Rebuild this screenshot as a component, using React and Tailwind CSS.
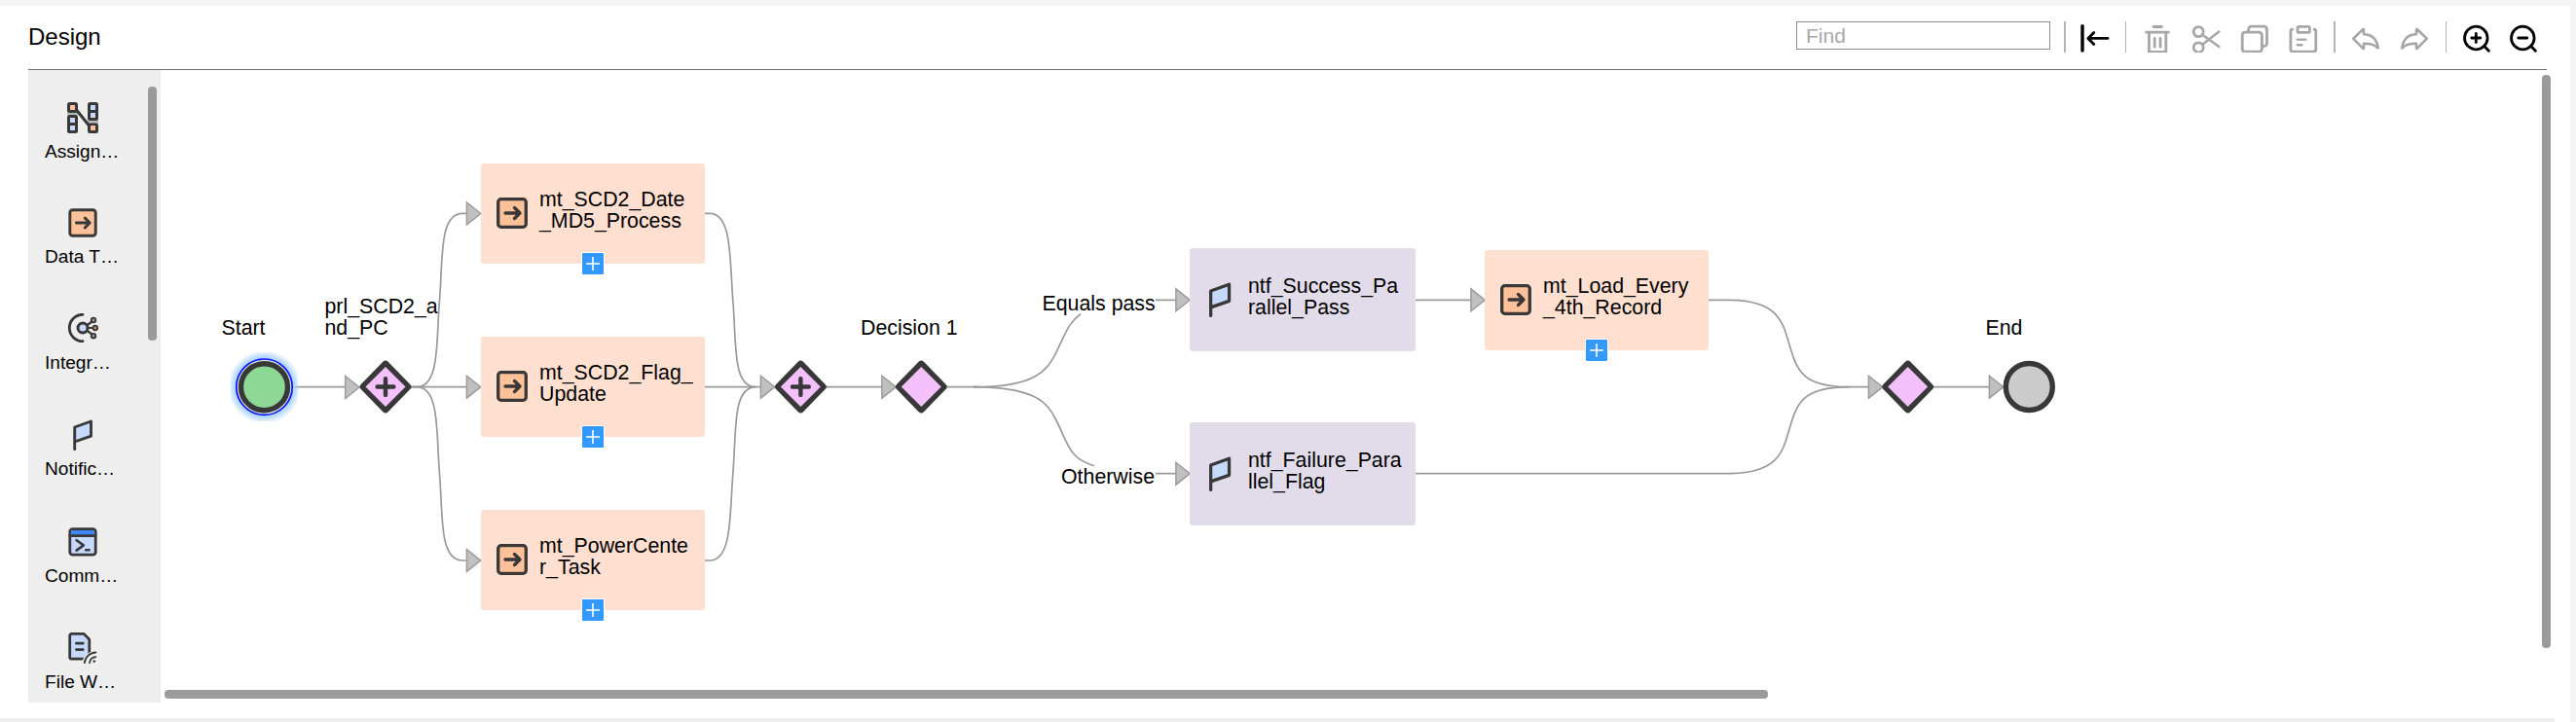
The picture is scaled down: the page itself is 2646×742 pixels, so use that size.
import React from "react";

const INK = "#383838";

const TaskIcon = ({ className }) => (
  <svg viewBox="0 0 32 32" className={className} fill="none" stroke={INK} strokeWidth="3.3" strokeLinecap="round" strokeLinejoin="round">
    <rect x="1.7" y="1.7" width="28.6" height="28.6" rx="3" fill="#ffc199" />
    <path d="M9 16h14.5M18.5 10.5l5.5 5.5-5.5 5.5" />
  </svg>
);

const SmallTaskIcon = ({ className }) => (
  <svg viewBox="0 0 32 32" className={className} fill="none" stroke={INK} strokeWidth="2.9" strokeLinecap="round" strokeLinejoin="round">
    <rect x="2.8" y="2.7" width="26.4" height="26.6" rx="2.8" fill="#ffc199" />
    <path d="M9.4 16h13.4M18.2 11l5 5-5 5" />
  </svg>
);

const FlagIcon = ({ className }) => (
  <svg viewBox="0 0 32 32" className={className} fill="none" stroke={INK} strokeWidth="2.9" strokeLinecap="round" strokeLinejoin="round">
    <path d="M7.7 30.6V8l16.8-6v15.2L7.7 23z" fill="#c5dafa" />
  </svg>
);

const AssignIcon = ({ className }) => (
  <svg viewBox="0 0 32 32" className={className}>
    <path d="M0 10.500h11v3H0zM21 18.500h11v3.500H21z" fill="#b9beb6" />
    <path d="M10 8.500l12 15" stroke={INK} strokeWidth="3" />
    <rect x="0" y="0" width="11" height="11" rx="2.5" fill={INK} />
    <rect x="0" y="13" width="11" height="19" rx="2.5" fill={INK} />
    <rect x="21" y="0" width="11" height="19" rx="2.5" fill={INK} />
    <rect x="21" y="21.5" width="11" height="10.5" rx="2.5" fill={INK} />
    <path d="M3 3h5v5H3zM24 24h5v5h-5z" fill="#ffc199" />
    <path d="M3 16h5v5H3zM3 24h5v5H3zM24 3h5v5h-5zM24 11h5v5h-5z" fill="#c5dafa" />
  </svg>
);

const IntegrationIcon = ({ className }) => (
  <svg viewBox="0 0 32 32" className={className} fill="none" stroke={INK} strokeLinecap="round">
    <path d="M16 1.3a13.7 13.7 0 0 0 0 27.4" strokeWidth="2.8" />
    <path d="M20 12.5l5.5-4M21 15h6M20 17.5l5.5 4" strokeWidth="2.2" />
    <circle cx="16" cy="15" r="5" strokeWidth="3" fill="#c5dafa" />
    <g strokeWidth="1.8" fill="#b98d78">
      <circle cx="27" cy="7" r="2.3" />
      <circle cx="28.8" cy="15" r="2.3" />
      <circle cx="27" cy="23.2" r="2.3" />
    </g>
  </svg>
);

const CommandIcon = ({ className }) => (
  <svg viewBox="0 0 32 32" className={className} fill="none" stroke={INK} strokeWidth="2.8" strokeLinecap="round" strokeLinejoin="round">
    <rect x="2.8" y="2.6" width="26.4" height="26.6" rx="2.8" fill="#c5dafa" />
    <path d="M4.2 4h23.6v5H4.2z" fill="#3f87ff" stroke="none" />
    <path d="M3 9.6h26" />
    <path d="M9.6 14.2l7.2 5.2-7.2 5.2M19.2 24.2h3.4" strokeWidth="2.6" />
  </svg>
);

const FileIcon = ({ className }) => (
  <svg viewBox="0 0 32 32" className={className} fill="none" stroke={INK} strokeWidth="2.8" strokeLinecap="round" strokeLinejoin="round">
    <path d="M4.5 1.4h12.7l5.6 5.8v20H4.5a1.8 1.8 0 0 1-1.8-1.8V3.2a1.8 1.8 0 0 1 1.8-1.8z" fill="#c5dafa" />
    <path d="M9.4 11.2h6.8M9.4 17.6h6.8" />
    <path d="M14.8 32.5a16 16 0 0 1 16-14v14z" fill="#eeeeee" stroke="none" />
    <path d="M17.8 31.2a12 12 0 0 1 11.6-10.7M23 31.2a7 7 0 0 1 6.4-6" strokeWidth="1.8" />
    <circle cx="27.8" cy="29.6" r="0.9" fill={INK} strokeWidth="1" />
  </svg>
);

const PALETTE = [
  { label: "Assign…", Icon: AssignIcon, size: "h-[108px]" },
  { label: "Data T…", Icon: SmallTaskIcon, size: "h-[109px]" },
  { label: "Integr…", Icon: IntegrationIcon, size: "h-[109px]" },
  { label: "Notific…", Icon: FlagIcon, size: "h-[110px]" },
  { label: "Comm…", Icon: CommandIcon, size: "h-[109px]" },
  { label: "File W…", Icon: FileIcon, size: "h-[72px]" },
];

/* ---------- toolbar ---------- */

const tool = {
  fill: "none",
  viewBox: "0 0 32 32",
  strokeWidth: 2.8,
  strokeLinecap: "round",
  strokeLinejoin: "round",
};

const CURVED_ARROW =
  "M3.2 17.7L13 8.2q1-.6 1 .6v4.4c8.5.2 13.600 5.200 14.700 14.300-4-4.200-8.600-5-14.700-4.800v4.500q0 1.200-1 .5z";

function Toolbar() {
  return (
    <div className="flex h-8">
      <input
        placeholder="Find"
        className="h-[29px] w-[261px] border border-[#8c8c8c] bg-white pl-[9px] text-[21px] leading-[27px] text-black outline-none placeholder:text-[#a8a8a8]"
      />
      <div className="ml-[14px] h-8 w-[2px] bg-[#b4b4b4]" />
      <svg {...tool} stroke="#000" className="ml-[14px] h-8 w-8">
        <path d="M3 4.600v25.400" strokeWidth="3.400" />
        <path d="M9 17.400h20M14.800 11.400l-6 6 6 6" />
      </svg>
      <div className="ml-[15px] h-8 w-px bg-[#b4b4b4]" />
      <svg {...tool} stroke="#a6a6a6" className="ml-4 h-8 w-8">
        <path d="M4.600 11.200h22.800M12 5.500h8.400" />
        <path d="M7.400 11.400v20.100h17.400V11.400" />
        <path d="M13.200 17.400v8.800M19 17.400v8.800" />
      </svg>
      <svg {...tool} stroke="#a6a6a6" className="ml-[18px] h-8 w-8">
        <circle cx="8.200" cy="10.600" r="5" />
        <circle cx="8.200" cy="26.800" r="5" />
        <path d="M12.600 14L29.300 26M12.600 23.400L29.300 10.600" strokeWidth="2.500" />
      </svg>
      <svg {...tool} stroke="#a6a6a6" className="ml-[18px] h-8 w-8">
        <rect x="3.200" y="11.200" width="20.200" height="20" rx="3" />
        <path d="M9.600 10V8.200a3 3 0 0 1 3-3h12.900a3 3 0 0 1 3 3V22.400a3 3 0 0 1-3 3h-1.500" />
      </svg>
      <svg {...tool} stroke="#a6a6a6" className="ml-[18px] h-8 w-8">
        <rect x="10" y="5.400" width="12.400" height="6" rx="1.500" />
        <path d="M4.600 8.200a2 2 0 0 0-1.700 2V28.500a2.700 2.700 0 0 0 2.700 2.700h20.500a2.700 2.700 0 0 0 2.700-2.700V10.200a2 2 0 0 0-1.700-2" />
        <path d="M9.800 18.600h8.600M9.800 24.300h4.600" strokeWidth="2.400" />
      </svg>
      <div className="ml-[15px] h-8 w-[2px] bg-[#b4b4b4]" />
      <svg {...tool} stroke="#a6a6a6" className="ml-[15px] h-8 w-8" strokeWidth="2.600">
        <path d={CURVED_ARROW} />
      </svg>
      <svg {...tool} stroke="#a6a6a6" className="ml-[18px] h-8 w-8" strokeWidth="2.600">
        <path transform="translate(32 0) scale(-1 1)" d={CURVED_ARROW} />
      </svg>
      <div className="ml-4 h-8 w-px bg-[#b4b4b4]" />
      <svg {...tool} stroke="#000" className="ml-4 h-8 w-8">
        <circle cx="14.300" cy="17" r="11.800" />
        <path d="M22.800 25.600l4.600 4.600M9.800 17h9M14.300 12.500v9" />
      </svg>
      <svg {...tool} stroke="#000" className="ml-4 h-8 w-8">
        <circle cx="14.300" cy="17" r="11.800" />
        <path d="M22.800 25.600l4.600 4.600M9.800 17h9" />
      </svg>
    </div>
  );
}

/* ---------- diagram ---------- */

const ORIGIN = { x: 165, y: 72 };
const at = (x, y) => ({ left: x - ORIGIN.x, top: y - ORIGIN.y });

const TASKS = [
  { x: 494, y: 168, lines: ["mt_SCD2_Date", "_MD5_Process"] },
  { x: 494, y: 346, lines: ["mt_SCD2_Flag_", "Update"] },
  { x: 494, y: 524, lines: ["mt_PowerCente", "r_Task"] },
  { x: 1525, y: 257, lines: ["mt_Load_Every", "_4th_Record"] },
];

const NOTICES = [
  { x: 1222, y: 255, lines: ["ntf_Success_Pa", "rallel_Pass"] },
  { x: 1222, y: 434, lines: ["ntf_Failure_Para", "llel_Flag"] },
];

const LABELS = [
  { x: 227.5, y: 326, lines: ["Start"] },
  { x: 333.5, y: 304, lines: ["prl_SCD2_a", "nd_PC"] },
  { x: 884, y: 326, lines: ["Decision 1"] },
  { x: 2039.5, y: 326, lines: ["End"] },
  { x: 1070.5, y: 301, lines: ["Equals pass"] },
  { x: 1090, y: 479, lines: ["Otherwise"] },
];

const Lines = ({ lines }) => (
  <div className="text-[21.33px] leading-[22px] whitespace-nowrap text-black">
    {lines.map((l) => (
      <div key={l}>{l}</div>
    ))}
  </div>
);

const Arrow = ({ x, y }) => (
  <path d={`M${x - 14.6} ${y - 11.5}v23l14.400-11.500z`} fill="#c0c0c0" stroke="#9c9c9c" strokeWidth="1.500" />
);

const Gateway = ({ x, plus }) => (
  <g strokeLinejoin="round" strokeLinecap="round" stroke={INK}>
    <path d={`M${x} 374.400l22.600 23.100-22.600 23.100-22.600-23.100z`} fill="#f3c0fb" strokeWidth="7.400" />
    <path d={`M${x} 377l20.500 20.500-20.500 20.500-20.500-20.500z`} fill="#f3c0fb" stroke="none" />
    {plus && <path d={`M${x - 8.4} 397.500h16.800M${x} 389.100v16.800`} strokeWidth="4.400" />}
  </g>
);

function Diagram() {
  return (
    <div className="relative h-[632px] w-[2440px] overflow-hidden">
      <svg viewBox="165 72 2440 632" className="absolute inset-0 h-[632px] w-[2440px]">
        <defs>
          <radialGradient id="halo">
            <stop offset="0.780" stopColor="#a9d2ff" />
            <stop offset="1" stopColor="#a9d2ff" stopOpacity="0" />
          </radialGradient>
          <clipPath id="haloBox">
            <rect x="237" y="362" width="69" height="71" />
          </clipPath>
        </defs>
        <g fill="none" stroke="#9a9a9a" strokeWidth="1.700">
          <path d="M298 397.700H360M422 397.700H485M724 397.700H786M848 397.700H910M973 397.700H1005" />
          <path d="M422 397.700H428C452 397.700 448 350 451.500 308.500C455 266 451 219.300 475 219.300H482" />
          <path d="M422 397.700H428C452 397.700 448 445.400 451.500 487C455 529.500 451 576 475 576H482" />
          <path d="M724 219.300H729C752 219.300 749.500 266 752.800 308.500C756.500 351 752 397.700 776 397.700" />
          <path d="M724 576H729C752 576 749.500 529.500 752.800 487C756.500 444.500 752 397.700 776 397.700" />
          <path d="M1000 397.700C1068 397.700 1076 378 1084 364C1095 342 1097 332 1110 322.700" />
          <path d="M1000 397.700C1064 397.700 1076 414 1085 432C1098 458 1098 471 1124 478.700" />
          <path d="M1187 308.300H1212M1187 486.700H1212M1453 308.300H1515" />
          <path d="M1755 308.300H1775C1826 308.300 1831 330 1838 354C1846 382 1852 397.700 1900 397.700H1925" />
          <path d="M1453 486.700H1775C1826 486.700 1831 465 1838 441C1846 413 1852 397.700 1900 397.700" />
          <path d="M1986 397.700H2048" />
        </g>
        <Arrow x={369.3} y={398} />
        <Arrow x={494} y={219.5} />
        <Arrow x={494} y={397.7} />
        <Arrow x={494} y={576} />
        <Arrow x={796} y={397.7} />
        <Arrow x={920.5} y={397.7} />
        <Arrow x={1222.5} y={308.3} />
        <Arrow x={1222.5} y={486.7} />
        <Arrow x={1525.5} y={308.3} />
        <Arrow x={1934} y={397.7} />
        <Arrow x={2058} y={397.7} />
        <circle cx="271.500" cy="397.700" r="38" fill="url(#halo)" clipPath="url(#haloBox)" />
        <circle cx="271.500" cy="397.700" r="28.700" fill="#d7e6d9" stroke="#0a14ff" strokeWidth="1.700" />
        <circle cx="271.500" cy="397.700" r="24" fill="#8ed896" stroke={INK} strokeWidth="5.400" />
        <Gateway x={396} plus />
        <Gateway x={822.4} plus />
        <Gateway x={946.3} />
        <Gateway x={1959.7} />
        <circle cx="2084.300" cy="397.500" r="24" fill="#cbcbcb" stroke={INK} strokeWidth="5.400" />
      </svg>

      {TASKS.map((t) => (
        <div key={t.lines[0]} style={at(t.x, t.y)} className="absolute flex h-[103px] w-[230px] rounded-[3px] bg-[#ffdfcf] pt-[26px] pl-[15.5px]">
          <TaskIcon className="mt-[9px] h-8 w-8 shrink-0" />
          <div className="ml-[12.5px]">
            <Lines lines={t.lines} />
          </div>
          <svg viewBox="0 0 24 24" className="absolute bottom-[-12px] left-[103px] h-6 w-6">
            <rect width="24" height="24" rx="2" fill="#fff" />
            <rect x="1" y="1" width="22" height="22" rx="1" fill="#3399ff" />
            <path d="M5 12h14M12 5v14" stroke="#fff" strokeWidth="1.600" />
          </svg>
        </div>
      ))}

      {NOTICES.map((n) => (
        <div key={n.lines[0]} style={at(n.x, n.y)} className="absolute flex h-[106px] w-[232px] rounded-[3px] bg-[#e2dcea] pt-[28px] pl-[13px]">
          <FlagIcon className="mt-[7px] h-[36px] w-[36px] shrink-0" />
          <div className="ml-[11px]">
            <Lines lines={n.lines} />
          </div>
        </div>
      ))}

      {LABELS.map((l) => (
        <div key={l.lines[0]} style={at(l.x, l.y)} className="absolute">
          <Lines lines={l.lines} />
        </div>
      ))}
    </div>
  );
}

export default function App() {
  return (
    <div className="flex h-[742px] w-[2646px] flex-col overflow-hidden border-t-[6px] border-r-[6px] border-[#f3f3f3] bg-white font-['Liberation_Sans',Arial,sans-serif] text-black">
      <header className="ml-[29px] flex h-[66px] w-[2587px] justify-between border-b border-[#6e6e6e] pt-4 pr-[7px]">
        <h1 className="text-2xl leading-8">Design</h1>
        <Toolbar />
      </header>

      <main className="ml-[29px] flex h-[666px]">
        <aside className="flex h-[650px] w-[136px] bg-[#eeeeee]">
          <ul className="w-[123px] pt-[33px] pl-[17px]">
            {PALETTE.map(({ label, Icon, size }) => (
              <li key={label} className={size}>
                <Icon className="ml-[23px] h-8 w-8" />
                <div className="mt-[7px] text-[19.1px] leading-6 whitespace-nowrap">{label}</div>
              </li>
            ))}
          </ul>
          <div className="mt-[17px] h-[261px] w-[9px] rounded-[4px] bg-[#9b9b9b]" />
        </aside>

        <section className="flex w-[2446px] flex-col">
          <Diagram />
          <div className="mt-[5px] ml-[4px] h-[9px] w-[1647px] rounded-[4px] bg-[#9b9b9b]" />
        </section>
        <div className="mt-[5px] h-[589px] w-[9px] rounded-[4px] bg-[#9b9b9b]" />
      </main>
      <div className="h-1 w-[2624px] bg-[#eeeeee]" />
    </div>
  );
}
